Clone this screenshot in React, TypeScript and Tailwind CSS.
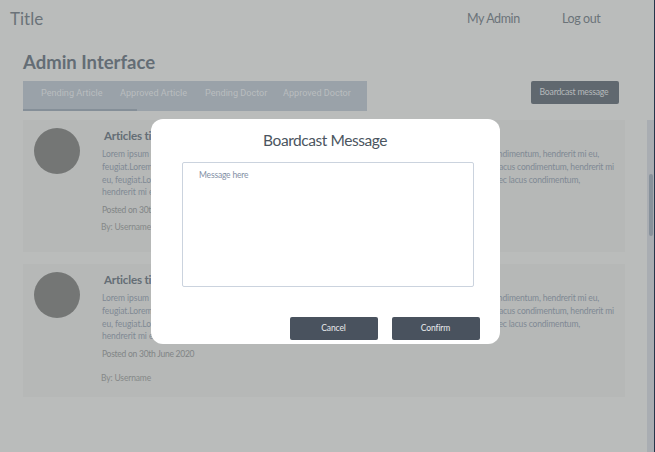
const tabs = [
  { label: 'Pending Article', cls: 'ml-[18px] w-[79px] pt-[6px]' },
  { label: 'Approved Article', cls: 'w-[85px] pt-[6px]' },
  { label: 'Pending Doctor', cls: 'w-[78px] pt-[6px]' },
  { label: 'Approved Doctor', cls: 'pt-[6px]' },
];

const lines = [
  { start: 'Lorem ipsum dolor sit', end: 'nec lacus condimentum, hendrerit mi eu,', width: 'w-[497px]' },
  { start: 'feugiat.Lorem ipsum', end: 'nec lacus condimentum, hendrerit mi', width: 'w-[512px]' },
  { start: 'eu, feugiat.Lorem', end: 'amet, nec lacus condimentum,', width: 'w-[478px]' },
  { start: 'hendrerit mi eu,', end: '', width: 'w-[478px]' },
];

function ArticleCard({ size, byline }: { size: string; byline: string }) {
  return (
    <article className={`flex w-[602px] bg-[#b6b8b7] ${size}`}>
      <div className="ml-[11px] mt-[8px] size-[46px] shrink-0 rounded-full bg-[#747675]" />
      <div className="ml-[22px] w-[512px] whitespace-nowrap text-[8.5px] text-[#7f8994]">
        <h2 className="ml-[2px] mt-[8px] h-[20px] text-[11.6px] font-bold leading-[15px] tracking-[-0.2px] text-[#646d75]">Articles title</h2>
        {lines.map((line) => (
          <p key={line.start} className={`flex h-[12.8px] justify-between leading-[13px] tracking-[-0.06px] ${line.width}`}>
            <span>{line.start}</span>
            <span className="tracking-[-0.16px]">{line.end}</span>
          </p>
        ))}
        <p className="mt-[5px] leading-[12px] tracking-[-0.26px] text-[#818586]">Posted on 30th June 2020</p>
        <p className={`-ml-px leading-[12px] tracking-[-0.15px] text-[#858888] ${byline}`}>By: Username</p>
      </div>
    </article>
  );
}

export default function App() {
  return (
    <div className="relative flex h-[452px] w-[655px] overflow-hidden bg-[#babcbb] font-['Lato',sans-serif] text-[#6b7379]">
      <div className="flex w-[647px] shrink-0 flex-col whitespace-nowrap">
        <header className="flex h-[37px] items-center pl-[10px]">
          <div className="w-[457px] text-[17px] leading-[20px]">Title</div>
          <nav className="flex text-[12.5px] leading-[16px] tracking-[-0.4px]">
            <a className="w-[95px]">My Admin</a>
            <a>Log out</a>
          </nav>
        </header>
        <main className="pl-[23px]">
          <h1 className="mt-[13px] h-[31px] text-[18.5px] font-bold leading-[24px] text-[#646d75]">Admin Interface</h1>
          <div className="flex items-start">
            <div className="h-[30px] w-[344px] bg-[#9aa2a9]">
              <div className="flex h-[28px] font-['Roboto',sans-serif] text-[9.1px] leading-[12px] text-[#b9bdbf]">
                {tabs.map((tab) => (
                  <span key={tab.label} className={tab.cls}>{tab.label}</span>
                ))}
              </div>
              <div className="h-[2px] w-[114px] bg-[#858f98]" />
            </div>
            <button className="ml-[164px] h-[23px] w-[88px] rounded-[2px] bg-[#60686f] pb-[2px] pr-[2px] text-[8.7px] leading-[21px] tracking-[-0.23px] text-[#b5b9bb]">Boardcast message</button>
          </div>
          <div className="mt-[9px] flex flex-col gap-[12px]">
            <ArticleCard size="h-[132px]" byline="mt-[5px]" />
            <ArticleCard size="h-[133px]" byline="mt-[12px]" />
          </div>
        </main>
      </div>
      <div className="mt-[120px] w-[7px] bg-[#a9adb2] pl-[2px] pt-[54px]">
        <div className="h-[62px] w-[4px] rounded-full bg-[#87919b]" />
      </div>
      <div className="absolute right-0 top-0 h-full w-px bg-[#26364b]" />

      <section role="dialog" className="absolute left-[151px] top-[119px] flex h-[225px] w-[349px] flex-col rounded-[12px] bg-white">
        <h2 className="mt-[11px] pr-px text-center text-[15.5px] leading-[20px] tracking-[-0.44px] text-[#4b5560]">Boardcast Message</h2>
        <div className="ml-[31px] mt-[12px] h-[125px] w-[292px] rounded-[2px] border border-[#cbd3de] pl-[16px] pt-[6px] text-[8.5px] leading-[12px] tracking-[-0.18px] text-[#8390a5]">Message here</div>
        <div className="ml-[139px] mt-[30px] flex gap-[14px] text-[8.5px] leading-[21px] tracking-[-0.1px] text-[#e8eaed]">
          <button className="h-[23px] w-[88px] rounded-[2px] bg-[#49525e] pr-px">Cancel</button>
          <button className="h-[23px] w-[88px] rounded-[2px] bg-[#49525e] pr-px">Confirm</button>
        </div>
      </section>
    </div>
  );
}
